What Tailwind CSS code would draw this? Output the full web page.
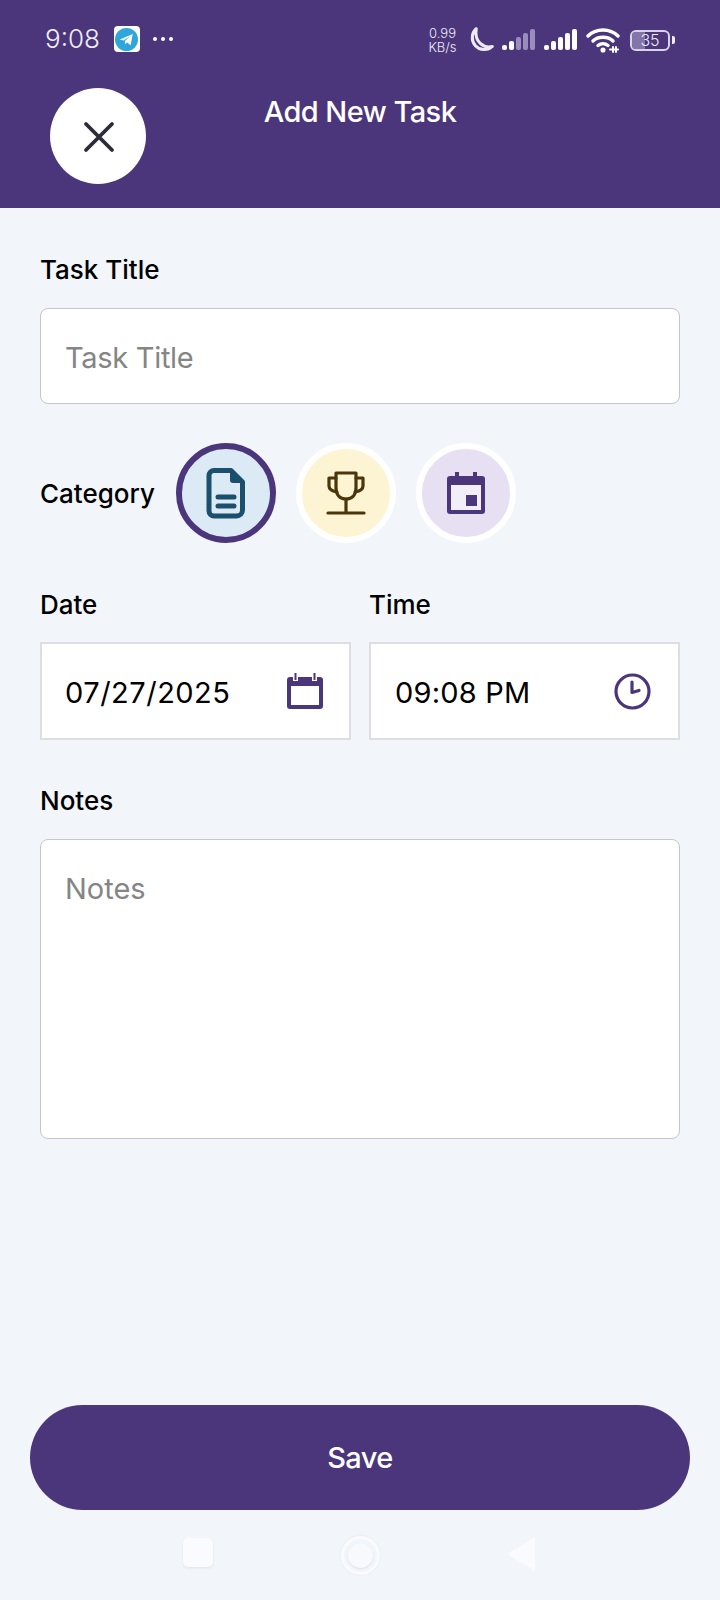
<!DOCTYPE html>
<html>
<head>
<meta charset="utf-8">
<script src="https://cdn.jsdelivr.net/npm/@tailwindcss/browser@4"></script>
</head>
<body class="m-0 w-[720px] h-[1600px] bg-[#f2f5fa] font-['Inter',sans-serif] text-black overflow-hidden flex flex-col">
<header class="h-[208px] bg-[#4b367c] flex flex-col shrink-0 text-white">
  <div class="h-[80px] pl-[45px] pr-[45px] pt-[26px] flex items-start justify-between">
    <div class="flex items-center h-[26px] text-[#f1eef8]">
      <span class="text-[26px] leading-[26px] font-light">9:08</span>
      <span class="ml-[14px] w-[26px] h-[26px] rounded-[4px] bg-white flex items-center justify-center">
        <svg width="23" height="23" viewBox="0 0 24 24"><circle cx="12" cy="12" r="12" fill="#2ea6dc"/><path d="M5 12 18.5 6.3 16.3 18 12.6 15.2 10.6 17 10.2 13.6 16 8.6 8.8 13Z" fill="#fff"/></svg>
      </span>
      <span class="ml-[13px] flex gap-[4px] items-center">
        <span class="w-[4px] h-[4px] rounded-full bg-white"></span><span class="w-[4px] h-[4px] rounded-full bg-white"></span><span class="w-[4px] h-[4px] rounded-full bg-white"></span>
      </span>
    </div>
    <div class="flex items-center h-[26px] text-[#eeebf6] mt-[1px]">
      <div class="flex flex-col items-center text-[13px] leading-[14px] w-[33px] font-light"><span>0.99</span><span>KB/s</span></div>
      <svg class="ml-[6px]" width="30" height="28" viewBox="0 0 27 26"><path d="M10 2.500A11 11 0 1 0 25 19C17 21 8 15 10 2.500Z" fill="none" stroke="#eeebf6" stroke-width="2.800" stroke-linejoin="round"/></svg>
      <svg class="ml-[7px]" width="34" height="24" viewBox="0 0 34 24"><rect x="0" y="17" width="5" height="5" rx="2" fill="#fff"/><rect x="7" y="13" width="5" height="9" rx="2" fill="#fff"/><rect x="14" y="9" width="5" height="13" rx="2" fill="#9a8cbc"/><rect x="21" y="5" width="5" height="17" rx="2" fill="#9a8cbc"/><rect x="28" y="1" width="5" height="21" rx="2" fill="#9a8cbc"/></svg>
      <svg class="ml-[8px]" width="34" height="24" viewBox="0 0 34 24"><rect x="0" y="17" width="5" height="5" rx="2" fill="#fff"/><rect x="7" y="13" width="5" height="9" rx="2" fill="#fff"/><rect x="14" y="9" width="5" height="13" rx="2" fill="#fff"/><rect x="21" y="5" width="5" height="17" rx="2" fill="#fff"/><rect x="28" y="1" width="5" height="21" rx="2" fill="#fff"/></svg>
      <svg class="ml-[8px]" width="34" height="26" viewBox="0 0 34 26" fill="none" stroke="#fff" stroke-width="3.400" stroke-linecap="round"><path d="M2 9C10 1 24 1 32 9"/><path d="M7 14C12 9 22 9 27 14"/><path d="M12 18.500C15 16 19 16 22 18.500"/><circle cx="17" cy="23" r="1.800" fill="#fff" stroke-width="1.500"/><path d="M24 22.500H32M27 20V25M30 20V25" stroke-width="2"/></svg>
      <div class="ml-[10px] w-[40px] h-[21px] rounded-[6px] border-2 border-[#d9d3e8] relative overflow-hidden flex items-center justify-center">
        <span class="absolute left-0 top-0 bottom-0 w-[13px] bg-[#8375a8]"></span>
        <span class="relative text-[16px] leading-none font-light">35</span>
      </div>
      <span class="ml-[2px] w-[3px] h-[8px] rounded-r-[2px] bg-[#eeebf6]"></span>
    </div>
  </div>
  <div class="relative flex-1">
    <div class="absolute left-[50px] top-[8px] w-[96px] h-[96px] rounded-full bg-white flex items-center justify-center">
      <svg class="ml-[2px] mt-[2px]" width="48" height="48" viewBox="0 0 48 48" fill="none" stroke="#2b2b3a" stroke-width="3.800" stroke-linecap="round"><path d="M11 11 37 37M37 11 11 37"/></svg>
    </div>
    <h1 class="text-center text-[29px] leading-[34px] font-[550] tracking-[-0.55px] m-0 mt-[15px]">Add New Task</h1>
  </div>
</header>
<main class="flex-1 flex flex-col px-[40px] pt-[45px]">
  <div class="text-[26px] leading-[34px] font-medium">Task Title</div>
  <div class="mt-[21px] h-[96px] rounded-[8px] border border-[#c3c6cc] bg-white flex items-center px-[24px] text-[29px] tracking-[-0.3px] text-[#858585]"><span class="pt-[3px]">Task Title</span></div>
  <div class="mt-[39px] flex items-center h-[100px]">
    <span class="text-[26px] leading-[32px] font-medium w-[136px] pt-[2px]">Category</span>
    <div class="flex gap-[20px]">
      <span class="w-[100px] h-[100px] rounded-full border-[6px] border-[#4b367c] bg-[#dbeaf5] flex items-center justify-center">
        <svg width="40" height="52" viewBox="0 0 40 52"><path d="M8 3.500H25L36.500 15V43a6 6 0 0 1-6 6H8a5 5 0 0 1-5-5V8.500a5 5 0 0 1 5-5Z" fill="none" stroke="#1a4f6e" stroke-width="5" stroke-linejoin="round"/><path d="M24 2 38 16H27a3 3 0 0 1-3-3Z" fill="#1a4f6e"/><path d="M12 30H28M12 39H28" stroke="#1a4f6e" stroke-width="5" stroke-linecap="round"/></svg>
      </span>
      <span class="w-[100px] h-[100px] rounded-full border-[6px] border-white bg-[#fdf4d3] flex items-center justify-center">
        <svg width="40" height="44" viewBox="0 0 40 44" fill="none" stroke="#4a3609" stroke-width="3.200" stroke-linejoin="round" stroke-linecap="round"><path d="M10 2H30V17C30 24 26 28 20 28 14 28 10 24 10 17Z"/><path d="M10 7H3V15C3 18 6 20 11 21M30 7H37V15C37 18 34 20 29 21"/><path d="M20 28V42M2 42H38"/></svg>
      </span>
      <span class="w-[100px] h-[100px] rounded-full border-[6px] border-white bg-[#e6e0f2] flex items-center justify-center">
        <svg width="38" height="42" viewBox="0 0 38 42"><rect x="8" y="0" width="4" height="6" fill="#4b367c"/><rect x="26" y="0" width="4" height="6" fill="#4b367c"/><path d="M3 4H35a3 3 0 0 1 3 3V39a3 3 0 0 1-3 3H3a3 3 0 0 1-3-3V7a3 3 0 0 1 3-3Z" fill="#4b367c"/><rect x="4" y="13" width="30" height="25" fill="#f2eef8"/><rect x="19" y="23" width="11" height="11" fill="#4b367c"/></svg>
      </span>
    </div>
  </div>
  <div class="mt-[45px] grid grid-cols-2 gap-x-[18px]">
    <div class="text-[26px] leading-[34px] font-medium">Date</div>
    <div class="text-[26px] leading-[34px] font-medium">Time</div>
    <div class="mt-[20px] h-[98px] border-2 border-[#dcdee2] bg-white flex items-center justify-between pl-[23px] pr-[26px] text-[29px] tracking-[0.5px]">
      <span class="pt-[4px]">07/27/2025</span>
      <svg width="36" height="36" viewBox="0 0 36 36"><path d="M3 4H33a3 3 0 0 1 3 3V33a3 3 0 0 1-3 3H3a3 3 0 0 1-3-3V7a3 3 0 0 1 3-3Z" fill="#4b367c"/><rect x="4" y="13" width="28" height="19" fill="#fff"/><rect x="6" y="0" width="5" height="8" fill="#fff"/><rect x="7.500" y="0" width="2" height="7" fill="#4b367c"/><rect x="25" y="0" width="5" height="8" fill="#fff"/><rect x="26.500" y="0" width="2" height="7" fill="#4b367c"/></svg>
    </div>
    <div class="mt-[20px] h-[98px] border-2 border-[#dcdee2] bg-white flex items-center justify-between pl-[24px] pr-[27px] text-[29px] tracking-[0.2px]">
      <span class="pt-[4px]">09:08 PM</span>
      <svg width="37" height="37" viewBox="0 0 37 37" fill="none" stroke="#4b367c" stroke-width="3.200" stroke-linecap="round" stroke-linejoin="round"><circle cx="18.500" cy="18.500" r="16.500"/><path d="M18 9V19.500L25 17.500"/></svg>
    </div>
  </div>
  <div class="mt-[44px] text-[26px] leading-[34px] font-medium">Notes</div>
  <div class="mt-[21px] h-[300px] rounded-[8px] border border-[#c3c6cc] bg-white px-[24px] pt-[31px] text-[29px] leading-[36px] text-[#858585]">Notes</div>
</main>
<div class="px-[30px] shrink-0">
  <div class="h-[105px] rounded-full bg-[#4b367c] text-white flex items-center justify-center text-[29px] font-[550] tracking-[-0.55px]">Save</div>
</div>
<nav class="h-[90px] shrink-0 flex items-start pt-[28px] pl-[183px]">
  <span class="w-[30px] h-[29px] rounded-[5px] bg-[#fafbfe] shadow-[0_1px_2px_rgba(170,180,200,0.25)]"></span>
  <span class="ml-[128px] -mt-[2px] w-[39px] h-[39px] rounded-full border-[3px] border-[#fafbfe] shadow-[0_0_2px_rgba(170,180,200,0.25)] flex items-center justify-center">
    <span class="w-[25px] h-[25px] rounded-full bg-[#f8f9fd] shadow-[0_1px_2px_rgba(170,180,200,0.3)]"></span>
  </span>
  <svg class="ml-[126px] -mt-[2px]" width="30" height="36" viewBox="0 0 30 36"><path d="M29 1V35L1 18Z" fill="#fafbfe"/></svg>
</nav>
</body>
</html>
